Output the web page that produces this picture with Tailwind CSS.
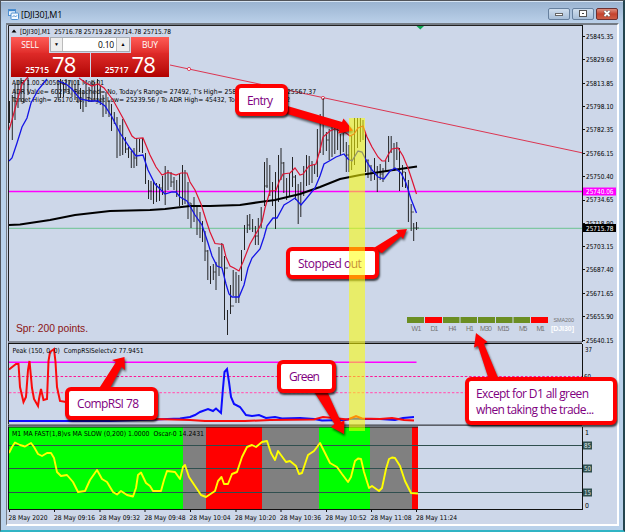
<!DOCTYPE html>
<html lang="en">
<head>
  <meta charset="UTF-8" />
  <meta name="viewport" content="width=device-width,initial-scale=1.0" />
  <title>[DJI30],M1</title>
  <script src="https://cdn.jsdelivr.net/npm/@tailwindcss/browser@4"></script>
</head>
<body class="w-[625px] h-[532px] overflow-hidden bg-[#2b3038] font-['DejaVu_Sans_Condensed','DejaVu_Sans',sans-serif] text-black">
  <div class="relative w-[625px] h-[532px] flex flex-col border-t border-l border-[#51545a] bg-[#b9d1ea] border-r-2 border-r-[#24454f] border-b-2 border-b-[#30b4c4]">

    <!-- title bar -->
    <header class="h-[22px] shrink-0 flex items-center pl-[7px] pr-[5px] bg-linear-to-b from-[#9bb4d1] to-[#bad0e9] border-t border-[#d6e4f3]">
      <svg class="w-[11px] h-[11px] mt-[3px]" viewBox="0 0 11 11">
        <rect x=".5" y=".5" width="7" height="6" fill="#eaf4ff" stroke="#4e8fd0"/>
        <path d="M1 1.5H7" stroke="#3c83cc" stroke-width="1.4"/>
        <rect x="3" y="4" width="7.5" height="6.5" rx="1" fill="#f4f9ff" stroke="#4e8fd0"/>
        <path d="M4.5 8L6 6.5L7.5 8L9 6.3" fill="none" stroke="#4e8fd0"/>
      </svg>
      <h1 class="ml-[2px] mt-[3px] text-[9px] leading-none font-['Open_Sans',sans-serif] tracking-[-0.2px]">[DJI30],M1</h1>
      <div class="ml-auto mt-[2px] flex gap-[2px]">
        <div class="w-[22px] h-[12px] rounded-[2px] border border-[#66809e] bg-linear-to-b from-[#cfdeee] to-[#a7bed8] flex items-center justify-center">
          <span class="w-[8px] h-[3px] mt-[2px] bg-white border border-[#666]"></span>
        </div>
        <div class="w-[22px] h-[12px] rounded-[2px] border border-[#66809e] bg-linear-to-b from-[#cfdeee] to-[#a7bed8] flex items-center justify-center">
          <span class="w-[6px] h-[5px] border-2 border-white outline outline-[#555] bg-[#444]"></span>
        </div>
        <div class="w-[22px] h-[12px] rounded-[2px] border border-[#6d3030] bg-linear-to-b from-[#dc8c7c] via-[#c5422d] to-[#cc5d45] flex items-center justify-center">
          <svg class="w-[8px] h-[7px]" viewBox="0 0 8 7"><path d="M1.5 1L6.5 6M6.5 1L1.5 6" stroke="#555" stroke-width="3"/><path d="M1.5 1L6.5 6M6.5 1L1.5 6" stroke="#fff" stroke-width="1.8"/></svg>
        </div>
      </div>
    </header>

    <!-- chart client area -->
    <main class="ml-[5px] w-[613px] h-[503px] shrink-0 border-l border-t-2 border-[#747b84] border-r-2 border-r-white border-b-2 border-b-white bg-[#cdd7e9] flex">
      <div class="w-[575px] shrink-0 flex flex-col">

        <!-- price pane, x 7..582, y 25..343 -->
        <svg class="block w-[575px] h-[319px] shrink-0" viewBox="7 25 575 319">
          <path d="M8.500 344V25.500H582" fill="none" stroke="#222"/>
          <path d="M416.500 26H424L420.300 29.500Z" fill="#0fa551"/>
          <path d="M170 65L583 153" stroke="#dc2340" stroke-width=".9"/>
          <g fill="#fff" stroke="#dc2340" stroke-width=".8"><circle cx="189" cy="69" r="1.600"/><circle cx="323" cy="98" r="1.600"/></g>
          <path d="M9 191.500H582" stroke="#f0f" stroke-width="1.300"/>
          <path d="M9 228.300H582" stroke="#6cc391"/>
          <g fill="#000" font-size="6.900">
            <path d="M11.500 32.500L14 29.500L16.500 32.500Z"/>
            <text x="20" y="33.500" textLength="151" lengthAdjust="spacingAndGlyphs">[DJI30],M1&#160; 25716.78 25719.28 25714.78 25715.78</text>
            <text x="12" y="84.700" textLength="92" lengthAdjust="spacingAndGlyphs">ADR 1.00.20050427.01 Mod 01</text>
            <text x="12" y="93.700" textLength="304" lengthAdjust="spacingAndGlyphs">ADR Value= 60273, Reached= No, Today's Range= 27492, T's High= 25845.14, T's Low= 25567.37</text>
            <text x="12" y="102.200" textLength="278" lengthAdjust="spacingAndGlyphs">Target High= 26170.10, Target Low= 25239.56 / To ADR High= 45432, To ADR Low= 32782</text>
          </g>
          <!-- high/low bars -->
          <path fill="none" stroke="#111" stroke-width=".9" d="M9.500 101V123M12.300 95V140M15 84V120M18 80V108M21 78V102M24 80V103M28 78V95M58 80V98M60.500 79V98M63.500 82V97M66 79V93M69 80V94M72 80V97M75 84V100M78 80V103M80.500 88V109M83 90V112M86 84V107M89 87V102M92 80V102M94.700 82V101M97.500 79V102M100.300 85V105M103 95V117M106 92V114M109 100V117M111.500 104V131M114.300 112V124M117 117V158M120 125V156M122.700 119V155M125.500 137V153M128.500 147V158M131.300 151V168M134 148V168M136.700 138V166M139.500 139V152M142.500 138V153M145.500 153V184M148.500 180V199M151 181V200M153.500 181V204M156.500 183V202M159.500 184V201M162.500 176V195M165.200 166V205M168 170V190M171 172V187M174 177V190M176.700 180V197M179.500 174V206M182.500 165V205M185 170V204M188 182V219M191 203V228M194 197V222M197 206V235M200 212V238M202.500 221V242M205 231V261M207.800 250V280M210.500 266V284M213.300 264V280M216 262V290M219 247V276M221.800 243V267M224.500 256V320M227.500 310V335M230.500 285V314M233.200 270V296M236 272V303M238.800 275V303M241.500 250V281M244.500 225V250M247.300 215V233M249.800 214V230M252.600 219V232M255.400 226V245M258.300 218V245M261.200 207V228M264.500 162V206M267 158V188M269.800 165V196M272.500 182V206M275.500 172V229M278.500 155V202M281 148V180M283.800 162V193M286.600 178V200M289.500 173V196M292.500 157V187M295.500 175V200M298.200 184V224M300.800 182V217M303.700 166V196M306.500 155V186M309.200 156V185M312 161V183M314.600 164V174M317.400 129V177M320.200 114V153M323.200 98V155M326.400 132V151M329.200 129V160M332 125V157M334.800 127V154M337.600 128V150M340.400 134V155M343.300 133V152M346.300 142V172M349 145V172M351.600 136V170M354.500 118V165M357.500 118V148M360.400 118V142M363 120V140M365.500 132V172M368 160V178M371 165V181M374.500 158V180M377.300 166V192M380.200 164V180M383 168V182M385.700 160V172M388.600 136V162M391.200 136V153M394 143V171M396.800 142V160M399.500 148V191M402.500 165V187M405.500 172V188M408.400 180V222M411.200 204V231M413.700 223V241M416.500 222V230"/>
          <path fill="none" stroke="#333" stroke-width=".8" d="M126 149H129M134 158H137M149 191H152M160 188H163M171 182H174M188 203H191M205 251H208M213 272H216M225 268H228M231 306H234M247 225H250M255 236H258M265 186H268M281 163H284M292 177H295M326 140H329M346 155H349M366 160H369M380 174H383M402 172H405M411 212H414M414 228H419"/>
          <polyline fill="none" stroke="#000" stroke-width="2.100" points="9,225 20,224.500 50,220 75,215 110,211 150,210 165,209 190,206 210,206 240,205 260,202 275,200 300,194 320,187 340,179 360,175 380,172 400,169 417,166.500"/>
          <g fill="none" stroke="#dc1432" stroke-width="1.200">
            <polyline points="9,130 12,120 18,98 22,84 28,77"/>
            <polyline points="79,78 86,83 92,86 98,84 104,88 113,100 124,120 132,136 135,138.500 143,138 150,155 156,167 162,175 168,172.500 176,175 181,173 187,173 190,182 195,190 201,204 206,220 210,232 215,243.500 223,244.500 226,257 230,266 234,268 239,271 243,262 250,244 258,230 262,222 265,208 270,191 276,190.500 279,182 283,174 290,173 295,168 300,175 303,174 309,166 316,164 320,150 323,137 330,131 335,129 340,131 346,133 350,136 354,134 358,128 363,126 367,137 372,147 378,157 382,161 385,161 388,155 392,149 398,148 403,156 408,168 412,180 416.500,194"/>
          </g>
          <g fill="none" stroke="#1414e6" stroke-width="1.300">
            <polyline points="9,161 12,158 17,143 22,127 27,118 31,103 38,90 47,79"/>
            <polyline points="58,81 66,84 72,89 80,99 90,101 98,101 105,106 112,117 120,133 130,148 136,156 143,155 148,170 155,184 161,190 165,194 172,192 176,192 180,197 187,201 195,215 202,225 208,243 212,256 217,266 222,268 226,284 229,294 232,297 239,297 244,285 248,268 252,258 260,249 264,237 267,226 273,218 277,218 284,205 289,202 295,198 301,205 306,199 315,188 320,176 324,164 331,160 336,157 344,154 348,159 352,161 358,151 362,152 367,162 372,170 378,177 384,179 390,171 395,168 401,173 406,183 411,199 416.500,213"/>
          </g>
          <text x="16" y="332" font-size="10.300" fill="#8b1414" textLength="72" class="font-['Liberation_Sans',sans-serif]">Spr: 200 points.</text>
          <!-- timeframe strip -->
          <g fill="#6b8e23">
            <path d="M407 317H424V323H407ZM443 317H459.500V323H443ZM460.500 317H477V323H460.500ZM478 317H495V323H478ZM496 317H512.500V323H496ZM513.500 317H530V323H513.500Z"/>
            <path fill="red" d="M425 317H442V323H425ZM531 317H548V323H531Z"/>
          </g>
          <g font-size="7" fill="#757575" class="font-['Liberation_Sans',sans-serif]">
            <text x="411.500" y="330.500" textLength="10">W1</text><text x="430.500" y="330.500" textLength="8">D1</text>
            <text x="448.500" y="330.500" textLength="8">H4</text><text x="466" y="330.500" textLength="8">H1</text>
            <text x="480" y="330.500" textLength="12">M30</text><text x="497.500" y="330.500" textLength="12">M15</text>
            <text x="519" y="330.500" textLength="8.500">M5</text><text x="536.500" y="330.500" textLength="8.500">M1</text>
            <text x="553.500" y="321.500" font-size="5.500" textLength="20.500">SMA200</text>
            <text x="551" y="330.800" font-size="7" font-weight="bold" fill="#fff" textLength="23">[DJI30]</text>
          </g>
          <path d="M8 342H582" stroke="#858b98" stroke-width="2"/>
          <path d="M8 343.500H582" stroke="#111"/>
        </svg>

        <!-- RSI pane, y 344..426 -->
        <svg class="block w-[575px] h-[82px] shrink-0" viewBox="7 344 575 82">
          <path d="M8.500 344V426" stroke="#222"/>
          <path d="M9 362.300H416.500" stroke="#f0f" stroke-width="1.500"/>
          <path d="M9 376.500H582" stroke="#ff1493" stroke-dasharray="2.500 1.800"/>
          <path d="M9 392.700H582" stroke="#ff64b8" stroke-width="1.200" stroke-dasharray="2.500 1.800"/>
          <polyline fill="none" stroke="#0c0cff" stroke-width="2" points="9,421 110,421 155,419.500 180,418.500 190,417 195,415 200,412 208,409 213,411 216,408.500 221,413 223,388 224.500,372 227,369 229,382 231,397 234,404 240,407 246,415 252,416 259,415 266,418 275,417 282,418.500 300,418 314,419 322,420.500 345,420 352,418.500 365,419 380,419 395,420 403,418 414,417"/>
          <polyline fill="none" stroke="#fb0b0b" stroke-width="2" points="9,369.500 16,364 18.500,364 20,387 23.500,402 26,397 28,370 29.500,361 32,388 34,399 38,406 39,399 41,389 43.500,400 47,399 48.500,361 50,352 54,349 55.500,362 57,387 60,401 66,402"/>
          <polyline fill="none" stroke="#fb0b0b" stroke-width="2" points="110,419.500 156,419 190,420 205,421 245,421 270,420 314,419.500 323,417 333,418 348,419.500 356,416 362,418.500 380,419 392,418 404,420 414,420.500"/>
          <text x="12.500" y="353" font-size="6.900" fill="#000" textLength="131" lengthAdjust="spacingAndGlyphs">Peak (150, 0, 0)&#160; CompRSISelectv2 77.9451</text>
          <path d="M8 424.700H582" stroke="#858b98" stroke-width="1.500"/>
          <path d="M8 426H582" stroke="#111" stroke-width="1.200"/>
        </svg>

        <!-- oscillator pane, y 426..510 -->
        <svg class="block w-[575px] h-[84px] shrink-0" viewBox="7 426 575 84">
          <path fill="#0f0" d="M9 427H183V509H9ZM319 427H370V509H319Z"/>
          <path fill="#808080" d="M183 427H206V509H183ZM262 427H319V509H262ZM370 427H412V509H370Z"/>
          <path fill="red" d="M206 427H262V509H206ZM412 427H418V509H412Z"/>
          <path d="M9 445.500H582M9 468.500H582M9 492.500H582" stroke="#2f4f4f"/>
          <polyline fill="none" stroke="#ff0" stroke-width="1.900" stroke-linejoin="round" points="9,453 12,447 15,442.500 20,445 25,446.500 31,443 34,447 38,454 42,456 47,453 51,453 54,458 57,472 61,476 67,475 73,482 78,492 85,491 90,480 97,470 102,479 107,482 113,492 117,494.500 121,491 127,495 133,496.500 136,488 138,475 141,472.500 146,483 150,486 153,491 161,491 164,480 167,471 175,472 180,479 183,467 185,465 189,477 195,486 201,495 206,497 215,491 218,481 221.500,477 224,484 228,484 232,474 237,472 242,457 247,447 252,445 256,447 262,442 267,441 271,453 275,460 278,451 286,462 290,461 296,466 299,474 302,473 308,455 314,451 320,443 324,451 330,463 337,467 342,474 348,482 351,477 355,461 358,458.500 361,459 364,472 369,488 372,486 379,491 382,488 386,469 389,459 392,457.500 395,458 400,466 405,481 411,493 418,493.500"/>
          <text x="12" y="436.200" font-size="6.900" fill="#000" textLength="192" lengthAdjust="spacingAndGlyphs">M1 MA FAST(1,8)vs MA SLOW (0,200) 1.0000&#160; Oscar-0 14.2431</text>
          <path d="M8.500 426.500V509.500H582M8.500 427H418" fill="none" stroke="#111"/>
        </svg>

        <!-- time axis -->
        <svg class="block w-[575px] h-[14px] shrink-0" viewBox="7 510 575 14">
          <path d="M9.500 510V512M54.500 510V512M100 510V512M145 510V512M190.500 510V512M236 510V512M281 510V512M326.500 510V512M371.500 510V512M416.500 510V512" stroke="#111"/>
          <g font-size="6.700" fill="#000">
            <text x="8.500" y="519.700" textLength="39" lengthAdjust="spacingAndGlyphs">28 May 2020</text><text x="54" y="519.700" textLength="41" lengthAdjust="spacingAndGlyphs">28 May 09:16</text>
            <text x="99" y="519.700" textLength="41" lengthAdjust="spacingAndGlyphs">28 May 09:32</text><text x="144.500" y="519.700" textLength="41" lengthAdjust="spacingAndGlyphs">28 May 09:48</text>
            <text x="189.500" y="519.700" textLength="41" lengthAdjust="spacingAndGlyphs">28 May 10:04</text><text x="235" y="519.700" textLength="41" lengthAdjust="spacingAndGlyphs">28 May 10:20</text>
            <text x="280" y="519.700" textLength="41" lengthAdjust="spacingAndGlyphs">28 May 10:36</text><text x="325.500" y="519.700" textLength="41" lengthAdjust="spacingAndGlyphs">28 May 10:52</text>
            <text x="370.500" y="519.700" textLength="41" lengthAdjust="spacingAndGlyphs">28 May 11:08</text><text x="416" y="519.700" textLength="41" lengthAdjust="spacingAndGlyphs">28 May 11:24</text>
          </g>
        </svg>
      </div>

      <!-- value axis, x 582..617 -->
      <svg class="block w-[35px] h-[499px] shrink-0" viewBox="582 25 35 499">
        <path d="M582.500 25V342M582.500 344V424M582.500 427V510" stroke="#111"/>
        <path d="M583 36.500H585M583 59.500H585M583 83.500H585M583 106.500H585M583 129.500H585M583 153.500H585M583 176.500H585M583 200.500H585M583 223.500H585M583 246.500H585M583 269.500H585M583 293.500H585M583 316.500H585M583 340.500H585" stroke="#111"/>
        <g font-size="6.900" fill="#000">
          <text x="586" y="39" textLength="27.500" lengthAdjust="spacingAndGlyphs">25845.35</text><text x="586" y="62.300" textLength="27.500" lengthAdjust="spacingAndGlyphs">25829.60</text>
          <text x="586" y="85.700" textLength="27.500" lengthAdjust="spacingAndGlyphs">25813.85</text><text x="586" y="109" textLength="27.500" lengthAdjust="spacingAndGlyphs">25798.10</text>
          <text x="586" y="132.300" textLength="27.500" lengthAdjust="spacingAndGlyphs">25782.35</text><text x="586" y="155.700" textLength="27.500" lengthAdjust="spacingAndGlyphs">25766.15</text>
          <text x="586" y="179" textLength="27.500" lengthAdjust="spacingAndGlyphs">25750.40</text><text x="586" y="202.300" textLength="27.500" lengthAdjust="spacingAndGlyphs">25734.65</text>
          <text x="586" y="225.700" textLength="27.500" lengthAdjust="spacingAndGlyphs">25718.90</text><text x="586" y="249" textLength="27.500" lengthAdjust="spacingAndGlyphs">25703.15</text>
          <text x="586" y="272.300" textLength="27.500" lengthAdjust="spacingAndGlyphs">25687.40</text><text x="586" y="295.700" textLength="27.500" lengthAdjust="spacingAndGlyphs">25671.65</text>
          <text x="586" y="319" textLength="27.500" lengthAdjust="spacingAndGlyphs">25655.90</text><text x="586" y="342.500" textLength="27.500" lengthAdjust="spacingAndGlyphs">25640.15</text>
          <path fill="#f0f" d="M583 187.500H616V195.500H583Z"/><text x="586" y="194.200" fill="#fff" textLength="27.500" lengthAdjust="spacingAndGlyphs">25740.06</text>
          <path fill="#000" d="M583 224H616V232H583Z"/><text x="586" y="230.800" fill="#fff" textLength="27.500" lengthAdjust="spacingAndGlyphs">25715.78</text>
          <text x="585" y="351.500" textLength="7" lengthAdjust="spacingAndGlyphs">37</text><text x="584" y="379" textLength="7" lengthAdjust="spacingAndGlyphs">60</text>
          <text x="585" y="434.500">1</text><text x="585" y="508.300">0</text>
          <path fill="#2f4f4f" d="M583 441.500H592V449.500H583ZM583 464.500H592V472.500H583ZM583 488.500H592V496.500H583Z"/>
          <g fill="#dfe8e8"><text x="584" y="448" textLength="7" lengthAdjust="spacingAndGlyphs">85</text><text x="584" y="471" textLength="7" lengthAdjust="spacingAndGlyphs">50</text><text x="584" y="495" textLength="7" lengthAdjust="spacingAndGlyphs">15</text></g>
        </g>
      </svg>
    </main>

    <!-- one-click trading panel -->
    <section class="absolute left-[10px] top-[36px] w-[158px] h-[40px] flex flex-col text-white font-['Open_Sans',sans-serif]">
      <div class="flex h-[16px]">
        <div class="w-[38px] bg-linear-to-b from-[#ff5b55] to-[#e12d2b] text-[8.5px] leading-[15px] text-center tracking-[-0.2px]">SELL</div>
        <div class="flex-1 mx-px mb-px flex bg-white border border-[#a9adb3] text-black">
          <span class="w-[12px] bg-[#eeeeee] border-r border-[#bbb] text-[5px] leading-[12px] text-center">▼</span>
          <span class="flex-1 text-right pr-[2px] text-[8.5px] leading-[13px] tracking-[-0.2px]">0.10</span>
          <span class="w-[13px] bg-[#eeeeee] border-l border-[#bbb] text-[5px] leading-[12px] text-center">▲</span>
        </div>
        <div class="w-[38px] bg-linear-to-b from-[#ff5b55] to-[#e12d2b] text-[8.5px] leading-[15px] text-center tracking-[-0.2px]">BUY</div>
      </div>
      <div class="flex gap-px h-[24px]">
        <div class="flex-1 bg-linear-to-b from-[#df2a28] to-[#b10000] flex items-end justify-center gap-[3px] pb-[4px]">
          <span class="text-[8.5px] leading-[7px] font-semibold tracking-[-0.1px]">25715</span><span class="text-[22px] leading-[17px] tracking-[-1px]">78</span>
        </div>
        <div class="flex-1 bg-linear-to-b from-[#df2a28] to-[#b10000] flex items-end justify-center gap-[3px] pb-[4px]">
          <span class="text-[8.5px] leading-[7px] font-semibold tracking-[-0.1px]">25717</span><span class="text-[22px] leading-[17px] tracking-[-1px]">78</span>
        </div>
      </div>
    </section>

    <!-- callout arrows -->
    <svg class="absolute -left-px -top-px w-[625px] h-[532px] drop-shadow-[1px_2px_1px_rgba(0,0,0,0.6)]" viewBox="0 0 625 532">
      <g fill="red">
        <path d="M284 105L342 122L343.500 118.500L353 130.500L338 133.500L339.500 129.500L284 113Z"/>
        <path d="M372 249L398 233L396 230L407 229L403 239L401 236.500L382 253Z"/>
        <path d="M98 390L116 362L112 360L124.500 357L125 370L121.500 367L109 390Z"/>
        <path d="M313 390L334.500 424L331 427L344 434L344.500 420L341 422L326 389Z"/>
        <path d="M489 380L478 346L474 347.500L476 333L487.500 342L484 344L499 380Z"/>
      </g>
    </svg>
    <!-- callout boxes -->
    <div class="font-['Open_Sans',sans-serif] text-[12px] text-[#800080]">
      <div class="absolute left-[234px] top-[83px] w-[53px] h-[32px] bg-white border-4 border-[red] rounded-[6px] shadow-[1px_2px_2px_rgba(0,0,0,0.7)] pl-[8px] leading-[25px] tracking-[-0.8px]">Entry</div>
      <div class="absolute left-[285px] top-[246px] w-[93px] h-[32px] bg-white border-4 border-[red] rounded-[6px] shadow-[1px_2px_2px_rgba(0,0,0,0.7)] pl-[8px] leading-[25px] tracking-[-0.5px] whitespace-nowrap">Stopped out</div>
      <div class="absolute left-[64px] top-[386px] w-[93px] h-[33px] bg-white border-4 border-[red] rounded-[6px] shadow-[1px_2px_2px_rgba(0,0,0,0.7)] pl-[8px] leading-[25px] tracking-[-0.6px] whitespace-nowrap">CompRSI 78</div>
      <div class="absolute left-[276px] top-[359px] w-[59px] h-[33px] bg-white border-4 border-[red] rounded-[6px] shadow-[1px_2px_2px_rgba(0,0,0,0.7)] pl-[8px] leading-[26px] tracking-[-0.9px]">Green</div>
      <div class="absolute left-[464px] top-[376px] w-[152px] h-[48px] bg-white border-4 border-[red] rounded-[6px] shadow-[1px_2px_2px_rgba(0,0,0,0.7)] pl-[7px] pt-[5px] leading-[15.5px] tracking-[-0.6px] whitespace-nowrap">Except for D1 all green<br>when taking the trade...</div>
    </div>
    <!-- entry time highlight -->
    <div class="absolute left-[348px] top-[117px] w-[16px] h-[313px] bg-[#ffff00]/55"></div>
  </div>
</body>
</html>
